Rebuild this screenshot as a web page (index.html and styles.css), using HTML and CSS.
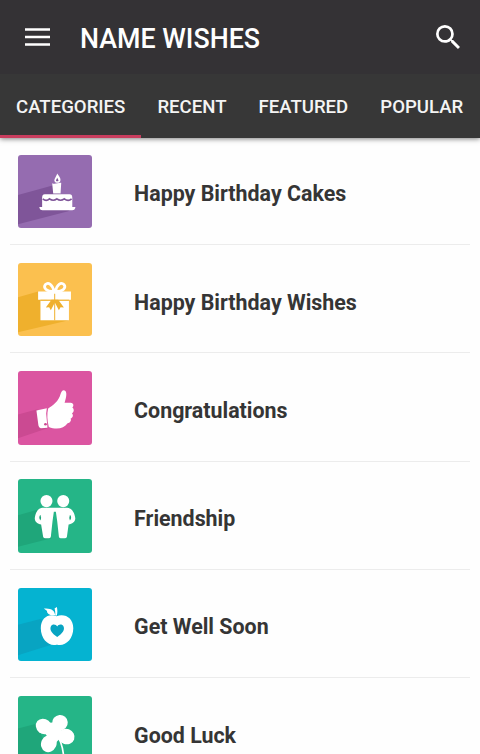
FILE: index.html
```html
<!DOCTYPE html>
<html lang="en">
<head>
<meta charset="utf-8">
<title>Name Wishes</title>
<link rel="stylesheet" href="styles.css">
</head>
<body>
<header class="header">
  <div class="toolbar">
    <svg class="menu" viewBox="0 0 25 18"><path d="M0 1.5h25M0 9h25M0 16.5h25" stroke="#fff" stroke-width="2.7"/></svg>
    <h1 class="title">NAME WISHES</h1>
    <svg class="search" viewBox="3 3 17.5 17.5"><path fill="#fff" d="M15.5 14h-.79l-.28-.27A6.47 6.47 0 0 0 16 9.5 6.5 6.5 0 1 0 9.5 16c1.61 0 3.09-.59 4.23-1.57l.27.28v.79l5 4.99L20.49 19l-4.99-5zm-6 0C7.01 14 5 11.99 5 9.5S7.01 5 9.5 5 14 7.01 14 9.5 11.99 14 9.5 14z"/></svg>
  </div>
  <nav class="tabs">
    <a class="tab active">CATEGORIES</a>
    <a class="tab">RECENT</a>
    <a class="tab">FEATURED</a>
    <a class="tab">POPULAR</a>
  </nav>
</header>
<main class="list">
  <div class="row">
    <svg class="tile purple" viewBox="0 0 219 219">
      <path class="shade" d="M0 119L103 91L162 155L150 168L0 207z"/>
      <path class="ink" d="M117 55c7 10 12 16 9 23-3 6-14 6-17 0-2-6 4-11 8-23zM102 84c8 5 18-2 27-1l-2 32h-22zM80 117h74q8 0 8 10v28h9v3q-2 7-9 7H73q-7 0-9-7v-3h8v-28q0-10 8-10z"/>
      <path class="line" d="M74 131q10 9 20 0q11 8 22 0q11 8 22 0q12 9 22 0" stroke-width="5"/>
      <path class="cut" d="M117 68l4 8q-4 5-8 0z"/>
    </svg>
    <span class="label">Happy Birthday Cakes</span>
  </div>
  <div class="row">
    <svg class="tile yellow" viewBox="0 0 219 219">
      <path class="shade" d="M0 102L60 85L152 171L0 207z"/>
      <path class="ink" d="M60 85h98v25H60zM67 112h85v59H67z"/>
      <path d="M107 85C104 64 90 56 82 64c-8 10 2 21 25 21zM112 85C115 64 129 56 137 64c8 10-2 21-25 21z" fill="none" stroke="#fff" stroke-width="8"/>
      <path class="cut" d="M100 110h20l17 23-10-1-5 9-12-23-12 23-5-9-10 1z"/>
      <path class="line" d="M109.500 92v79M67 111h85" stroke-width="3"/>
    </svg>
    <span class="label">Happy Birthday Wishes</span>
  </div>
  <div class="row">
    <svg class="tile pink" viewBox="0 0 219 219">
      <path class="shade" d="M0 130L58 114L90 170L0 201z"/>
      <path class="ink" d="M55 118l31-7-2 16 4 42-20 2q-6-1-7-8z"/>
      <path class="ink" d="M90 112C104 104 122 90 127 69q4-14 12-11c8 3 6 18 0 37h18c10 1 10 11 5 14 6 4 6 14-1 17 5 5 3 13-4 16 3 7-2 13-9 14-11 17-35 19-56 11-5-20-6-38-2-55z"/>
      <circle class="cut" cx="82" cy="159" r="4"/>
    </svg>
    <span class="label">Congratulations</span>
  </div>
  <div class="row">
    <svg class="tile green" viewBox="0 0 219 219">
      <path class="shade" d="M0 108L58 92L100 177L0 202z"/>
      <circle class="ink" cx="85" cy="66" r="18"/><circle class="ink" cx="135" cy="66" r="18"/>
      <path class="ink" d="M73 86h74c14 1 22 15 24 31 0 11-10 17-20 19l-5 36q-1 5-7 5h-11q-5 0-6-5l-5-46-4-28h-6l-4 28-5 46q-1 5-6 5H82q-6 0-7-5l-6-36c-10-2-19-8-19-19 2-16 9-30 23-31z"/>
      <path class="cut" d="M67 107q-7 8 0 17q4-7 0-17zM155 107q7 8 0 17q-4-7 0-17z"/>
    </svg>
    <span class="label">Friendship</span>
  </div>
  <div class="row">
    <svg class="tile cyan" viewBox="0 0 219 219">
      <path class="shade" d="M0 110L69 92L104 168L0 201z"/>
      <path class="ink" d="M115 84c25-9 50 5 50 36 0 30-20 50-40 50-4 0-6-1-9-1s-5 1-9 1c-19 0-39-20-39-50 0-31 23-45 47-36z"/>
      <path class="ink" d="M111 82c1-7 0-15-2-21l7-4c2 9 2 17 0 25zM77 61c19 0 31 2 34 20-16 2-24-3-25-13z"/>
      <path class="cut" d="M117 146c-17-11-23-21-19-31 4-9 16-7 19 0 3-7 15-9 19 0 4 10-2 20-19 31z"/>
    </svg>
    <span class="label">Get Well Soon</span>
  </div>
  <div class="row">
    <svg class="tile green" viewBox="0 0 219 219">
      <path class="shade" d="M0 97L55 83L90 165L0 203z"/>
      <ellipse class="ink" cx="77" cy="91" rx="25" ry="22" transform="rotate(40 77 91)"/>
      <ellipse class="ink" cx="125" cy="80" rx="24" ry="23" transform="rotate(-50 125 80)"/>
      <ellipse class="ink" cx="92" cy="142" rx="23" ry="26" transform="rotate(25 92 142)"/>
      <ellipse class="ink" cx="144" cy="121" rx="25" ry="23" transform="rotate(20 144 121)"/>
      <path class="ink" d="M86 80l28-1 24 36-31 30-28-35z"/>
      <path d="M112 110q20 27 24 68" fill="none" stroke="#fff" stroke-width="5"/>
    </svg>
    <span class="label">Good Luck</span>
  </div>
</main>
</body>
</html>
```
FILE: styles.css
```css
* { box-sizing: border-box; }
body {
  margin: 0;
  height: 754px;
  overflow: hidden;
  background: #fefefe;
  font-family: Roboto, sans-serif;
}
.header {
  position: relative;
  height: 138px;
  background: #373737;
  box-shadow: 0 1px 5px rgba(0, 0, 0, .5);
}
.toolbar {
  display: flex;
  align-items: center;
  height: 74px;
  padding: 0 20px 0 25px;
  background: #343235;
  color: #fff;
}
.menu { width: 25px; height: 18px; }
.title {
  flex: 1;
  margin: 3px 0 0 30px;
  font-size: 26.8px;
  font-weight: 500;
  line-height: 32px;
}
.search { width: 24px; height: 24px; }
.tabs { display: flex; height: 64px; }
.tab {
  padding: 0 16px;
  color: #f4f4f4;
  font-size: 18.6px;
  font-weight: 500;
  line-height: 67px;
  white-space: nowrap;
}
.active { border-bottom: 3px solid #c93d5e; }
.list { padding: 0 10px; margin-top: -1.4px; }
.row {
  display: flex;
  align-items: center;
  height: 108.3px;
  padding: 2px 0 0 8.2px;
  border-bottom: 1px solid #ececec;
}
.tile {
  flex: none;
  width: 73.4px;
  height: 73.4px;
  border-radius: 3px;
  background: var(--bg);
}
.purple { --bg: #956cb0; --dark: #7f5599; }
.yellow { --bg: #fbc04f; --dark: #efb02d; }
.pink { --bg: #db55a1; --dark: #cb4a92; }
.green { --bg: #25b587; --dark: #1fa67a; }
.cyan { --bg: #05b3d1; --dark: #08a4c2; }
.ink { fill: #fff; }
.shade { fill: var(--dark); }
.cut { fill: var(--dark); }
.line { fill: none; stroke: var(--dark); }
.label {
  margin: 6px 0 0 42.5px;
  color: #353535;
  font-size: 21.4px;
  font-weight: 700;
  line-height: 28px;
}
```
